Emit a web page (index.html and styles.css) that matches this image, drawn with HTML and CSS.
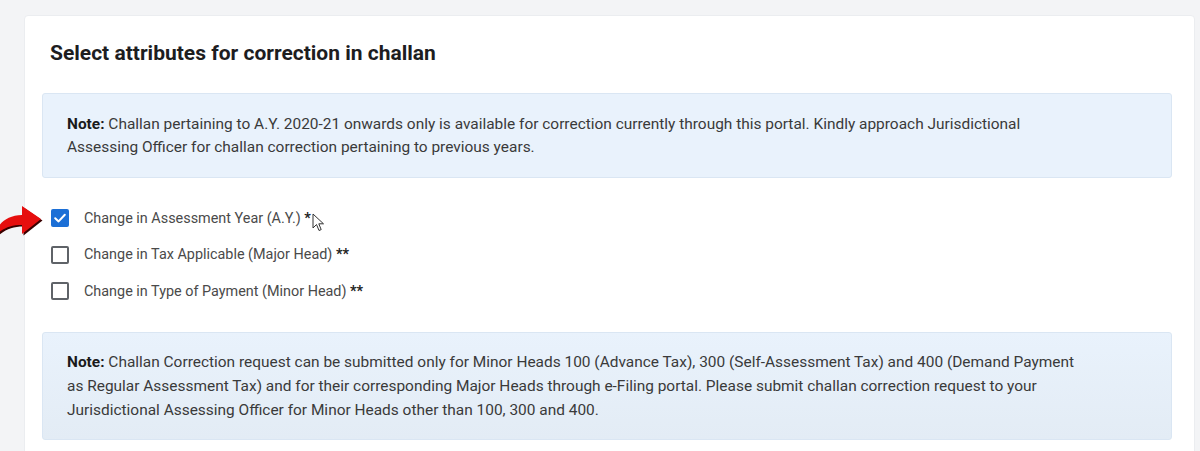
FILE: index.html
```html
<!DOCTYPE html>
<html>
<head>
<meta charset="utf-8">
<link rel="stylesheet" href="styles.css">
</head>
<body>
<div class="page">
  <div class="card">
    <h2 class="title">Select attributes for correction in challan</h2>
    <div class="note note-first">
      <b>Note:</b> Challan pertaining to A.Y. 2020-21 onwards only is available for correction currently through this portal. Kindly approach Jurisdictional Assessing Officer for challan correction pertaining to previous years.
    </div>
    <div class="options">
      <label class="option">
        <span class="box checked"><svg viewBox="0 0 18 18" width="18" height="18"><path d="M4.2 9.2 L7.6 12.4 L13.8 5.8" fill="none" stroke="#fff" stroke-width="2" stroke-linecap="round" stroke-linejoin="round"/></svg></span>
        <span class="label">Change in Assessment Year (A.Y.) <b>*</b></span>
      </label>
      <label class="option">
        <span class="box"></span>
        <span class="label">Change in Tax Applicable (Major Head) <b>**</b></span>
      </label>
      <label class="option">
        <span class="box"></span>
        <span class="label">Change in Type of Payment (Minor Head) <b>**</b></span>
      </label>
    </div>
    <div class="note note-second">
      <b>Note:</b> Challan Correction request can be submitted only for Minor Heads 100 (Advance Tax), 300 (Self-Assessment Tax) and 400 (Demand Payment as Regular Assessment Tax) and for their corresponding Major Heads through e-Filing portal. Please submit challan correction request to your Jurisdictional Assessing Officer for Minor Heads other than 100, 300 and 400.
    </div>
  </div>
  <svg class="arrow" viewBox="0 0 44 40" width="44" height="40">
    <path d="M-2 30 C6 24 12 22 22 22 L22 31 L41 16 L22 3 L22 12 C10 12 2 18 -2 24 Z" fill="#3a0000" transform="translate(1.5,1.5)"/>
    <path d="M-2 30 C6 24 12 22 22 22 L22 31 L41 16 L22 3 L22 12 C10 12 2 18 -2 24 Z" fill="#e60e0e"/>
  </svg>
  <svg class="cursor" viewBox="0 0 14 20" width="14" height="20">
    <path d="M1 1 L1 15 L4.5 11.5 L7 17.5 L9.2 16.6 L6.8 10.8 L11.5 10.8 Z" fill="#fff" stroke="#333" stroke-width="1"/>
  </svg>
</div>
</body>
</html>
```
FILE: styles.css
```css
html, body {
  margin: 0;
  padding: 0;
  background: #f3f4f6;
  font-family: Roboto, "Liberation Sans", Arial, sans-serif;
}
.page {
  position: relative;
  width: 1200px;
  height: 451px;
  overflow: hidden;
  padding: 15px 0 0 24px;
  box-sizing: border-box;
}
.card {
  width: 1171px;
  height: 460px;
  background: #fff;
  border: 1px solid #ebedf0;
  border-radius: 4px;
  box-sizing: border-box;
  padding: 0 22px 0 17px;
}
.title {
  margin: 25px 0 0 8px;
  font-size: 21px;
  line-height: 24px;
  font-weight: 700;
  color: #1d1d1f;
}
.note {
  background: #e9f2fc;
  border: 1px solid #dae6f3;
  border-radius: 3px;
  color: #3a3a3a;
  font-size: 15.45px;
  padding: 0 90px 0 24px;
}
.note b {
  color: #1a1a1a;
}
.note-first {
  margin-top: 28px;
  line-height: 23px;
  padding-top: 19px;
  padding-bottom: 18px;
}
.note-second {
  margin-top: 32px;
  line-height: 24px;
  padding-top: 17px;
  padding-bottom: 17px;
  background: linear-gradient(#e9f2fc, #e3ecf5);
}
.options {
  display: flex;
  flex-direction: column;
  gap: 18.5px;
  margin-top: 31px;
  padding-left: 9px;
}
.option {
  display: flex;
  align-items: center;
  gap: 15px;
  height: 18px;
}
.box {
  width: 18px;
  height: 18px;
  box-sizing: border-box;
  border: 2px solid #5f6368;
  border-radius: 2px;
  display: block;
}
.box.checked {
  border: none;
  background: #1b6fd6;
}
.box svg {
  display: block;
}
.label {
  font-size: 14.4px;
  color: #4a4a4a;
}
.label b {
  color: #222;
}
.arrow {
  position: absolute;
  left: 0;
  top: 203px;
}
.cursor {
  position: absolute;
  left: 312px;
  top: 213px;
}
```
